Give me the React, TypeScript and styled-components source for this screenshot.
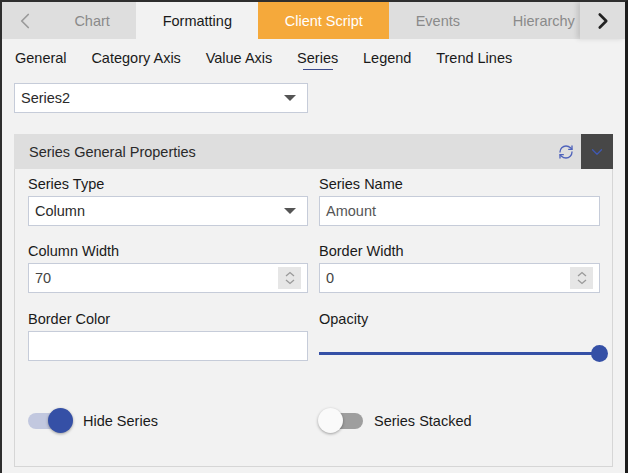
import React from "react";
import styled, { createGlobalStyle } from "styled-components";
import { ChevronLeft, ChevronRight, ChevronDown, RefreshCw } from "lucide-react";

const GlobalStyle = createGlobalStyle`
  html, body {
    margin: 0;
    padding: 0;
    background: #f2f2f2;
  }
  body {
    font-family: "Liberation Sans", Arial, sans-serif;
  }
`

const Frame = styled.div`
  width: 628px;
  height: 473px;
  box-sizing: border-box;
  border-top: 2px solid #2e2e2e;
  border-left: 2px solid #2e2e2e;
  border-right: 3px solid #1c1c1c;
  background: #f2f2f2;
  overflow: hidden;
  color: #1a1a1a;
  font-size: 14.5px;
`

const TabBar = styled.div`
  display: flex;
  height: 37px;
  background: #dedede;
`

const NavButton = styled.div<{ $side: "left" | "right" }>`
  flex: 0 0 ${p => (p.$side === "left" ? "46px" : "45px")};
  display: flex;
  align-items: center;
  justify-content: center;
  background: #dedede;
  box-shadow: ${p => (p.$side === "right" ? "-3px 0 5px rgba(0,0,0,0.12)" : "none")};
  z-index: 1;
`

const Tabs = styled.div`
  flex: 1;
  display: flex;
  overflow: hidden;
`

const Tab = styled.div<{ $kind?: "active" | "script" }>`
  flex: 0 0 auto;
  display: flex;
  align-items: center;
  padding: 0 26.4px;
  white-space: nowrap;
  background: ${p => (p.$kind === "active" ? "#f2f2f2" : p.$kind === "script" ? "#f5a93b" : "transparent")};
  color: ${p => (p.$kind === "active" ? "#1a1a1a" : p.$kind === "script" ? "#ffffff" : "#8a8a8a")};
`

const SubTabRow = styled.div`
  display: flex;
  align-items: center;
  gap: 24.8px;
  height: 38px;
  padding: 0 13px;
`

const SubTab = styled.div<{ $active?: boolean }>`
  position: relative;
  line-height: 17px;
  color: #1a1a1a;
  &::after {
    content: "";
    display: ${p => (p.$active ? "block" : "none")};
    position: absolute;
    left: 50%;
    bottom: -3px;
    width: 30px;
    height: 1px;
    transform: translateX(-50%);
    background: #3b4a8c;
  }
`

const Select = styled.div<{ $width?: string }>`
  box-sizing: border-box;
  width: ${p => p.$width || "100%"};
  height: 30px;
  display: flex;
  align-items: center;
  justify-content: space-between;
  padding: 0 11px 0 6px;
  background: #ffffff;
  border: 1px solid #c6ccd9;
  color: #2a2a2a;
`

const Caret = styled.span`
  width: 0;
  height: 0;
  border-left: 6px solid transparent;
  border-right: 6px solid transparent;
  border-top: 6px solid #555555;
`

const TopSelect = styled.div`
  margin: 6px 0 0 12px;
`

const Section = styled.div`
  margin: 21px 0 0 12px;
  width: 599px;
`

const SectionHeader = styled.div`
  display: flex;
  align-items: center;
  height: 35px;
  background: #dedede;
  padding-left: 15px;
  color: #2a2a2a;
`

const HeaderTitle = styled.div`
  flex: 1;
`

const IconSlot = styled.div`
  display: flex;
  align-items: center;
  justify-content: center;
  width: 30px;
  height: 100%;
`

const CollapseButton = styled.div`
  display: flex;
  align-items: center;
  justify-content: center;
  width: 32px;
  height: 100%;
  background: #474747;
`

const SectionBody = styled.div`
  box-sizing: border-box;
  border: 1px solid #d6d6d6;
  border-top: none;
  height: 298px;
  padding: 5.5px 12px 0 13px;
  display: grid;
  grid-template-columns: 280px 281px;
  column-gap: 11px;
  row-gap: 16.6px;
  align-content: start;
`

const Field = styled.div`
  display: flex;
  flex-direction: column;
`

const Label = styled.div`
  line-height: 18px;
  margin-bottom: 3px;
  color: #1a1a1a;
`

const Input = styled.div<{ $tone?: string }>`
  box-sizing: border-box;
  height: 30px;
  display: flex;
  align-items: center;
  justify-content: space-between;
  padding: 0 6px;
  background: #ffffff;
  border: 1px solid #c6ccd9;
  color: ${p => p.$tone || "#444444"};
`

const Spin = styled.div`
  width: 23px;
  height: 22px;
  background: #e6e6e6;
  display: flex;
  align-items: center;
  justify-content: center;
`

const SliderWrap = styled.div`
  box-sizing: border-box;
  height: 30px;
  padding-top: 15px;
  display: flex;
  align-items: center;
`

const SliderTrack = styled.div`
  position: relative;
  flex: 1;
  height: 3px;
  background: #3550a6;
`

const SliderThumb = styled.div`
  position: absolute;
  right: -8px;
  top: 50%;
  width: 17px;
  height: 17px;
  margin-top: -8.5px;
  border-radius: 50%;
  background: #3550a6;
`

const ToggleField = styled.div`
  display: flex;
  align-items: center;
  gap: 11px;
  height: 25px;
  margin-top: 31px;
`

const SwitchTrack = styled.div<{ $on?: boolean }>`
  position: relative;
  width: 44px;
  height: 16px;
  border-radius: 8px;
  background: ${p => (p.$on ? "#c2c8df" : "#9e9e9e")};
`

const SwitchThumb = styled.div<{ $on?: boolean }>`
  position: absolute;
  top: 50%;
  left: ${p => (p.$on ? "20px" : "-1px")};
  width: 25px;
  height: 25px;
  margin-top: -12.5px;
  border-radius: 50%;
  background: ${p => (p.$on ? "#3550a6" : "#fafafa")};
  box-shadow: 0 1px 3px rgba(0, 0, 0, 0.35);
`

function SpinIcon() {
  return (
    <Spin>
      <svg width="12" height="16" viewBox="0 0 12 16" fill="none" stroke="#9a9a9a" strokeWidth="1.3">
        <polyline points="2,6 6,2.5 10,6" />
        <polyline points="2,10 6,13.5 10,10" />
      </svg>
    </Spin>
  )
}

const tabs: { name: string, kind?: "active" | "script" }[] = [
  { name: "Chart" },
  { name: "Formatting", kind: "active" },
  { name: "Client Script", kind: "script" },
  { name: "Events" },
  { name: "Hierarchy" },
]

const subTabs = ["General", "Category Axis", "Value Axis", "Series", "Legend", "Trend Lines"]

function App() {
  return (
    <Frame>
      <GlobalStyle />
      <TabBar>
        <NavButton $side="left">
          <ChevronLeft size={26} strokeWidth={1.6} color="#9a9a9a" />
        </NavButton>
        <Tabs>
          {tabs.map(t => (
            <Tab key={t.name} $kind={t.kind}>{t.name}</Tab>
          ))}
        </Tabs>
        <NavButton $side="right">
          <ChevronRight size={26} strokeWidth={2.4} color="#222222" />
        </NavButton>
      </TabBar>

      <SubTabRow>
        {subTabs.map(s => (
          <SubTab key={s} $active={s === "Series"}>{s}</SubTab>
        ))}
      </SubTabRow>

      <TopSelect>
        <Select $width="294px">
          <span>Series2</span>
          <Caret />
        </Select>
      </TopSelect>

      <Section>
        <SectionHeader>
          <HeaderTitle>Series General Properties</HeaderTitle>
          <IconSlot>
            <RefreshCw size={16} strokeWidth={2} color="#4f63bb" />
          </IconSlot>
          <CollapseButton>
            <ChevronDown size={18} strokeWidth={1.6} color="#3f59b5" />
          </CollapseButton>
        </SectionHeader>
        <SectionBody>
          <Field>
            <Label>Series Type</Label>
            <Select>
              <span>Column</span>
              <Caret />
            </Select>
          </Field>
          <Field>
            <Label>Series Name</Label>
            <Input $tone="#555555">Amount</Input>
          </Field>
          <Field>
            <Label>Column Width</Label>
            <Input>
              <span>70</span>
              <SpinIcon />
            </Input>
          </Field>
          <Field>
            <Label>Border Width</Label>
            <Input>
              <span>0</span>
              <SpinIcon />
            </Input>
          </Field>
          <Field>
            <Label>Border Color</Label>
            <Input />
          </Field>
          <Field>
            <Label>Opacity</Label>
            <SliderWrap>
              <SliderTrack>
                <SliderThumb />
              </SliderTrack>
            </SliderWrap>
          </Field>
          <ToggleField>
            <SwitchTrack $on>
              <SwitchThumb $on />
            </SwitchTrack>
            <span>Hide Series</span>
          </ToggleField>
          <ToggleField>
            <SwitchTrack>
              <SwitchThumb />
            </SwitchTrack>
            <span>Series Stacked</span>
          </ToggleField>
        </SectionBody>
      </Section>
    </Frame>
  )
}

export default App
